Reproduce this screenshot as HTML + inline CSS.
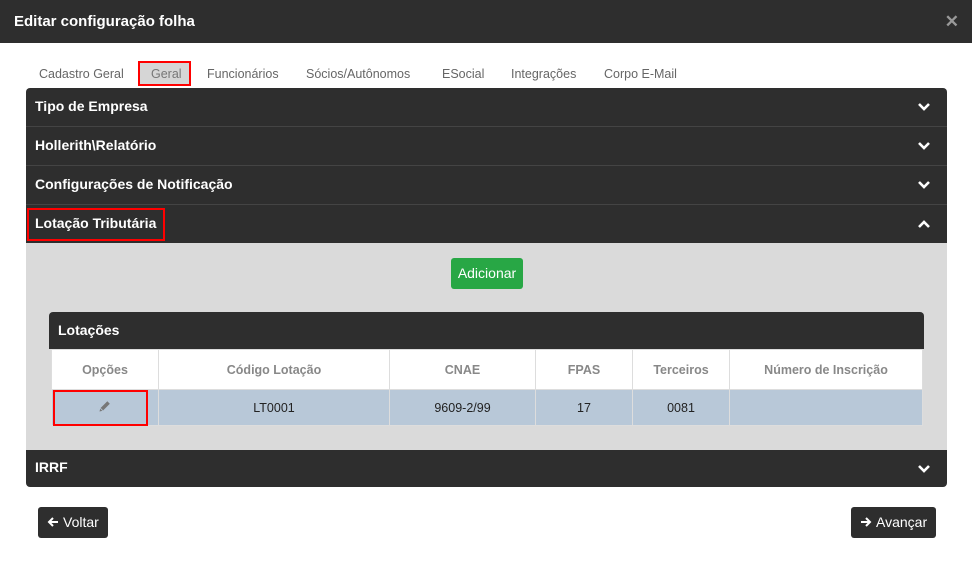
<!DOCTYPE html><html><head><meta charset="utf-8"><style>
*{box-sizing:border-box;margin:0;padding:0}
body{width:972px;height:572px;background:#fff;font-family:"Liberation Sans",Roboto,sans-serif;position:relative;overflow:hidden}
.hdr{position:absolute;left:0;top:0;width:972px;height:43px;background:#2e2e2e;color:#fff;font-weight:bold;font-size:15px;padding:13px 14px}
.x{position:absolute;right:13px;top:12px;color:#999;font-size:17px;font-weight:bold}
.tabs{position:absolute;top:67px;left:0;font-size:12.5px;color:#666}
.tabs span{position:absolute;white-space:nowrap}
.red{border:2px solid #f00}
.row{position:absolute;left:26px;width:921px;background:#2e2e2e;color:#fff;font-weight:bold;font-size:14px;padding-left:9px;border-bottom:1px solid #444}
.chev{position:absolute;right:16px;top:50%;margin-top:-5px}
.abs{position:absolute}
td{border:1px solid #ddd;text-align:center;font-size:12.5px}
</style></head><body>
<div class="hdr">Editar configuração folha<span class="x">✕</span></div>
<div class="tabs">
<span style="left:39px">Cadastro Geral</span>
<span class="red" style="left:138px;top:-6px;width:53px;height:25px;background:#d6d6d6;padding:4px 0 0 11px;color:#777">Geral</span>
<span style="left:207px">Funcionários</span>
<span style="left:306px">Sócios/Autônomos</span>
<span style="left:442px">ESocial</span>
<span style="left:511px">Integrações</span>
<span style="left:604px">Corpo E-Mail</span>
</div>
<div class="row" style="top:88px;height:39px;line-height:36px;border-radius:4px 4px 0 0">Tipo de Empresa<svg class="chev" width="14" height="10" viewBox="0 0 14 10"><path d="M2 2l5 5 5-5" stroke="#fff" stroke-width="2.6" fill="none"/></svg></div>
<div class="row" style="top:127px;height:39px;line-height:36px">Hollerith\Relatório<svg class="chev" width="14" height="10" viewBox="0 0 14 10"><path d="M2 2l5 5 5-5" stroke="#fff" stroke-width="2.6" fill="none"/></svg></div>
<div class="row" style="top:166px;height:39px;line-height:36px">Configurações de Notificação<svg class="chev" width="14" height="10" viewBox="0 0 14 10"><path d="M2 2l5 5 5-5" stroke="#fff" stroke-width="2.6" fill="none"/></svg></div>
<div class="row" style="top:205px;height:38px;line-height:36px;border:none">Lotação Tributária<svg class="chev" width="14" height="10" viewBox="0 0 14 10"><path d="M2 8l5-5 5 5" stroke="#fff" stroke-width="2.6" fill="none"/></svg></div>
<div class="abs red" style="left:27px;top:208px;width:138px;height:33px"></div>
<div class="abs" style="left:26px;top:243px;width:921px;height:207px;background:#dadada"></div>
<div class="abs" style="left:451px;top:258px;width:72px;height:31px;background:#28a745;border-radius:3px;color:#fff;font-size:14px;text-align:center;line-height:31px">Adicionar</div>
<div class="abs" style="left:49px;top:312px;width:875px;height:37px;background:#2e2e2e;border-radius:4px 4px 0 0;color:#fff;font-weight:bold;font-size:14px;padding:10px 9px">Lotações</div>
<table class="abs" style="left:51px;top:349px;width:872px;border-collapse:collapse">
<tr style="height:40px;background:#fff;color:#888;font-weight:bold"><td style="width:107px">Opções</td><td style="width:231px">Código Lotação</td><td style="width:146px">CNAE</td><td style="width:97px">FPAS</td><td style="width:97px">Terceiros</td><td>Número de Inscrição</td></tr>
<tr style="height:36px;background:#b8c8d8;color:#222"><td><svg width="14" height="14" viewBox="0 0 14 14"><path d="M1.5 12.5l.8-3.3 7-7 2.5 2.5-7 7z" fill="#777"/><path d="M2.3 9.2l2.5 2.5" stroke="#b8c8d8" stroke-width=".8"/></svg></td><td>LT0001</td><td>9609-2/99</td><td>17</td><td>0081</td><td></td></tr>
</table>
<div class="abs red" style="left:53px;top:390px;width:95px;height:36px"></div>
<div class="row" style="top:450px;height:37px;line-height:35px;border:none;border-radius:0 0 4px 4px">IRRF<svg class="chev" width="14" height="10" viewBox="0 0 14 10"><path d="M2 2l5 5 5-5" stroke="#fff" stroke-width="2.6" fill="none"/></svg></div>
<div class="abs" style="left:38px;top:507px;width:70px;height:31px;background:#2e2e2e;border-radius:3px;color:#fff;font-size:14px;line-height:31px;padding-left:9px"><svg width="12" height="12" viewBox="0 0 12 12" style="vertical-align:-1px;margin-right:4px"><path d="M11 6H2M6 2L2 6l4 4" stroke="#fff" stroke-width="2" fill="none"/></svg>Voltar</div>
<div class="abs" style="left:851px;top:507px;width:85px;height:31px;background:#2e2e2e;border-radius:3px;color:#fff;font-size:14px;line-height:31px;padding-left:9px"><svg width="12" height="12" viewBox="0 0 12 12" style="vertical-align:-1px;margin-right:4px"><path d="M1 6h9M6 2l4 4-4 4" stroke="#fff" stroke-width="2" fill="none"/></svg>Avançar</div>
</body></html>
